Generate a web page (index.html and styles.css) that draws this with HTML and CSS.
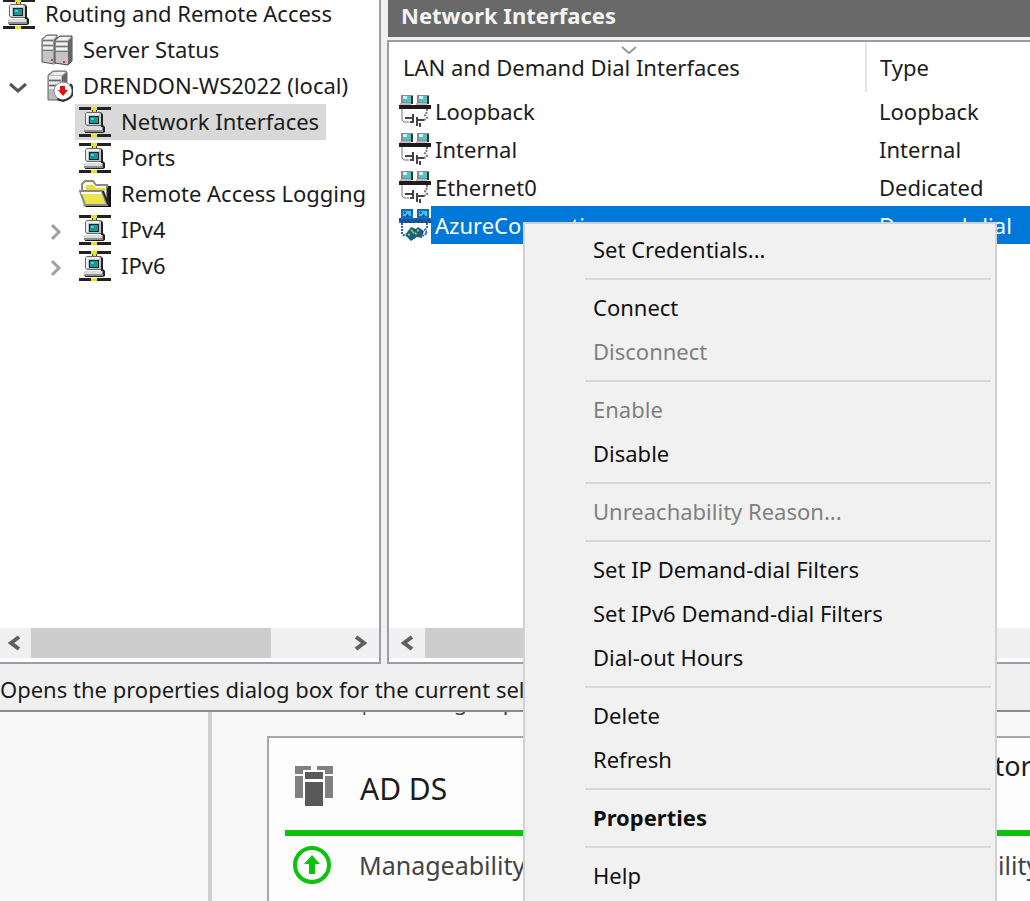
FILE: index.html
```html
<!DOCTYPE html>
<html lang="en">
<head>
<meta charset="utf-8">
<title>Routing and Remote Access</title>
<link rel="stylesheet" href="styles.css">
</head>
<body>
<svg class="defs" aria-hidden="true">
  <symbol id="i-net" viewBox="0 0 32 32">
    <path fill="#222" d="M0 1h32v3H0zM0 28h32v3H0z"/>
    <path fill="#e8e020" d="M12 1h6v3h-6zM12 28h6v3h-6zM14 4h3v2h-3z"/>
    <path fill="#444" d="M13 4h1v3h-1zM17 4h1v3h-1z"/>
    <path fill="#666" d="M8 6h14l2 2v12H8l-2-2V8z"/>
    <path fill="#222" d="M22 7l2 2v10l2 2v5l-2 1H6v-1h16v-6z"/>
    <path fill="#c4c7c7" d="M8 7h13l1 1v11H8l-1-1V8z"/>
    <path fill="#eee" d="M8 7h12v2H9v9H7V8z"/>
    <path fill="#222" d="M10 10h10v8H10z"/>
    <path fill="#129a98" d="M11 11h8v6h-8z"/>
    <path fill="#43d2c8" d="M12 12h3v2h-3z"/>
    <path fill="#8d9090" d="M6 21h18v5H5v-3z"/>
    <path fill="#dcdcdc" d="M6 21h17v3H5z"/>
  </symbol>
  <symbol id="i-servers" viewBox="0 0 32 32">
    <path fill="#c4c4c4" stroke="#555" d="M1 5l5-4h10v27l-3 2-12-2z"/>
    <path fill="#999" d="M12 6l3-3v26l-3 1z"/>
    <path fill="#c4c4c4" stroke="#444" d="M14 6l5-4h12v25l-4 4-13-2z"/>
    <path fill="#666" d="M27 7l4-4v24l-4 4z"/>
    <path fill="#f2f2f2" d="M6 2h9l-3 3H3zM19 3h10l-3 3H16zM2 8h10v2H2zM15 9h11v2H15zM2 13h10v2H2zM15 14h11v2H15z"/>
    <path fill="#777" d="M2 6h10v1H2zM15 7h12v1H15zM2 11h10v1H2zM15 12h12v1H15zM2 16h10v1H2zM15 17h12v1H15z"/>
    <path fill="#d33" d="M10 25h2v2h-2zM22 27h2v2h-2z"/>
  </symbol>
  <symbol id="i-stopped" viewBox="-5 0 32 32">
    <path fill="#bbb" stroke="#666" d="M2 5l5-4h13l1 2v22l-5 5H2z"/>
    <path fill="#eee" d="M3 6h12v3H3zM8 2h11l-3 3H5zM3 12h12v2H3zM3 17h12v2H3z"/>
    <path fill="#666" d="M16 6l5-4v12h-5zM3 10h12v1H3zM3 15h12v1H3z"/>
    <circle cx="17" cy="21" r="9" fill="#fff" stroke="#888" stroke-width="1"/>
    <path fill="none" stroke="#333" stroke-width="2" d="M24 14a9 9 0 0 1-2 15l-5 2-6-2"/>
    <path fill="#e01010" d="M14 16h5v4h3l-5 6-5-6h2z"/>
  </symbol>
  <symbol id="i-folder" viewBox="0 0 32 28">
    <path fill="#111" d="M28 6h4v21H7l-3-2h24z"/>
    <path fill="#f8f8e0" stroke="#888" stroke-width="2" d="M3 12V4l3-3h8l3 4h11v17"/>
    <path fill="#e4dd3c" d="M7 5h7l3 3h9v3H7z"/>
    <path fill="#e9e34e" stroke="#888" stroke-width="2" d="M1 11h22l5 14H6z"/>
    <path fill="none" stroke="#fff" stroke-width="2" d="M2 13h20"/>
    <path fill="none" stroke="#222" stroke-width="2" d="M24 11l5 13V8"/>
  </symbol>
  <symbol id="i-link" viewBox="0 0 32 32">
    <path fill="#8a8a8a" d="M2 0h12v9H2zM18 0h12v9H18z"/>
    <path fill="#4fc3c8" d="M4 1h8v6H4zM20 1h8v6h-8z"/>
    <path fill="#c9f3f3" d="M4 1h4v3H4zM20 1h4v3h-4z"/>
    <path fill="#333" d="M12 1h2v8h-2zM28 1h2v8h-2z"/>
    <path fill="#bbb" d="M1 8h11v2H1zM17 8h11v2H17z"/>
    <path fill="#1c1c1c" d="M0 10h32v4H0z"/>
    <path fill="none" stroke="#777" stroke-width="1" d="M3 14v11l2 2h5"/>
    <path fill="none" stroke="#777" stroke-width="2" stroke-dasharray="2 1" d="M28 14v3l-2 3 2 3-3 2h-5"/>
    <path fill="none" stroke="#444" stroke-width="2" d="M6 23h8M14 19v8M18 22v9M18 25h7M11 27h4M21 28v4"/>
  </symbol>
  <symbol id="i-dial" viewBox="0 0 32 32">
    <path fill="#1669b8" d="M2 0h12v9H2zM18 0h12v9H18zM0 9h32v5H0z"/>
    <path fill="#38c4f0" d="M4 2h8v5H4zM20 2h8v5h-8z"/>
    <path fill="none" stroke="#0b4380" stroke-width="2" stroke-dasharray="2 2" d="M0 11h32M2 13h30M5 3l5 5M21 3l5 5"/>
    <path fill="none" stroke="#1d6db5" stroke-width="2" stroke-dasharray="2 1" d="M3 14v11l3 2M28 14v4l-2 3 2 3-4 3"/>
    <path fill="#1c5f86" d="M6 26l6-8 5 2 2-2 6 4-2 7-5-1-6 4z"/>
    <path fill="none" stroke="#a8c63c" stroke-width="2" stroke-dasharray="2 3" d="M9 26l11-5M12 21l8 6"/>
  </symbol>
  <symbol id="i-left" viewBox="0 0 14 16"><path fill="none" stroke="#606060" stroke-width="4" d="M12 2L4 8l8 6"/></symbol>
  <symbol id="i-right" viewBox="0 0 14 16"><path fill="none" stroke="#606060" stroke-width="4" d="M2 2l8 6-8 6"/></symbol>
  <symbol id="i-up" viewBox="0 0 40 40">
    <circle cx="20" cy="20" r="17" fill="none" stroke="#0cc20c" stroke-width="4"/>
    <path fill="#0cc20c" d="M20 10l8 9h-5v10h-6V19h-5z"/>
  </symbol>
  <symbol id="i-adds" viewBox="0 0 40 42">
    <path fill="#808080" d="M1 1h16v4H9v4H1zM1 11h8v22H1zM23 1h16v8h-8V5h-8zM31 11h8v22h-8z"/>
    <path fill="#595959" d="M11 7h18v7H11zM11 17h18v24H11z"/>
  </symbol>
</svg>

<div class="screen">
  <main class="console">
    <nav class="pane tree" aria-label="Console tree">
      <ul class="nodes">
        <li class="node"><svg class="icon"><use href="#i-net"/></svg><span class="label">Routing and Remote Access</span></li>
        <li class="node level-1"><svg class="icon"><use href="#i-servers"/></svg><span class="label">Server Status</span></li>
        <li class="node level-1"><button class="twist open" aria-label="Collapse"><svg viewBox="0 0 20 12"><path d="M2 2l8 7 8-7"/></svg></button><svg class="icon"><use href="#i-stopped"/></svg><span class="label">DRENDON-WS2022 (local)</span></li>
        <li class="node level-2 selected"><svg class="icon"><use href="#i-net"/></svg><span class="label">Network Interfaces</span></li>
        <li class="node level-2"><svg class="icon"><use href="#i-net"/></svg><span class="label">Ports</span></li>
        <li class="node level-2"><svg class="icon"><use href="#i-folder"/></svg><span class="label">Remote Access Logging</span></li>
        <li class="node level-2"><button class="twist" aria-label="Expand"><svg viewBox="0 0 12 20"><path d="M2 3l7 7-7 7"/></svg></button><svg class="icon"><use href="#i-net"/></svg><span class="label">IPv4</span></li>
        <li class="node level-2"><button class="twist" aria-label="Expand"><svg viewBox="0 0 12 20"><path d="M2 3l7 7-7 7"/></svg></button><svg class="icon"><use href="#i-net"/></svg><span class="label">IPv6</span></li>
      </ul>
      <div class="scrollbar">
        <button class="arrow" aria-label="Scroll left"><svg><use href="#i-left"/></svg></button>
        <div class="track"><div class="thumb"></div></div>
        <button class="arrow" aria-label="Scroll right"><svg><use href="#i-right"/></svg></button>
      </div>
    </nav>
    <section class="detail">
      <h1 class="title">Network Interfaces</h1>
      <div class="pane list">
        <table class="grid">
          <thead>
            <tr><th class="name"><svg class="sort" viewBox="0 0 16 8"><path d="M1 1l7 6 7-6"/></svg>LAN and Demand Dial Interfaces</th><th class="type">Type</th></tr>
          </thead>
          <tbody>
            <tr><td><div class="cell"><svg class="icon"><use href="#i-link"/></svg><span class="text">Loopback</span></div></td><td class="kind">Loopback</td></tr>
            <tr><td><div class="cell"><svg class="icon"><use href="#i-link"/></svg><span class="text">Internal</span></div></td><td class="kind">Internal</td></tr>
            <tr><td><div class="cell"><svg class="icon"><use href="#i-link"/></svg><span class="text">Ethernet0</span></div></td><td class="kind">Dedicated</td></tr>
            <tr class="selected"><td><div class="cell"><svg class="icon"><use href="#i-dial"/></svg><span class="text">AzureConnection</span></div></td><td class="kind">Demand-dial</td></tr>
          </tbody>
        </table>
        <div class="scrollbar">
          <button class="arrow" aria-label="Scroll left"><svg><use href="#i-left"/></svg></button>
          <div class="track"><div class="thumb"></div></div>
        </div>
      </div>
    </section>
  </main>
  <footer class="status">Opens the properties dialog box for the current selection.</footer>
  <section class="dashboard">
    <div class="side"></div>
    <div class="roles">
      <p class="summary">Roles: 4&nbsp; | &nbsp;Server groups: 1</p>
      <div class="cards">
        <article class="card">
          <header class="head"><svg class="glyph"><use href="#i-adds"/></svg><h2 class="role short">AD DS</h2></header>
          <p class="line"><svg class="glyph"><use href="#i-up"/></svg>Manageability</p>
        </article>
        <article class="card">
          <header class="head"><svg class="glyph"><use href="#i-adds"/></svg><h2 class="role">File and Storage<br>Services</h2></header>
          <p class="line"><svg class="glyph"><use href="#i-up"/></svg>Manageability</p>
        </article>
      </div>
    </div>
  </section>

  <div class="menu" role="menu">
    <button class="item" role="menuitem">Set Credentials...</button>
    <hr class="rule">
    <button class="item" role="menuitem">Connect</button>
    <button class="item" role="menuitem" disabled>Disconnect</button>
    <hr class="rule">
    <button class="item" role="menuitem" disabled>Enable</button>
    <button class="item" role="menuitem">Disable</button>
    <hr class="rule">
    <button class="item" role="menuitem" disabled>Unreachability Reason...</button>
    <hr class="rule">
    <button class="item" role="menuitem">Set IP Demand-dial Filters</button>
    <button class="item" role="menuitem">Set IPv6 Demand-dial Filters</button>
    <button class="item" role="menuitem">Dial-out Hours</button>
    <hr class="rule">
    <button class="item" role="menuitem">Delete</button>
    <button class="item" role="menuitem">Refresh</button>
    <hr class="rule">
    <button class="item default" role="menuitem">Properties</button>
    <hr class="rule">
    <button class="item" role="menuitem">Help</button>
  </div>
</div>
</body>
</html>
```
FILE: styles.css
```css
* { box-sizing: border-box; }

body {
  margin: 0;
  font: 22px/36px "Noto Sans", "Open Sans", sans-serif;
  color: #1c1c1c;
}

button {
  border: 0;
  padding: 0;
  background: none;
  font: inherit;
  color: inherit;
}

.defs { display: none; }

.screen {
  position: relative;
  display: flex;
  flex-direction: column;
  height: 100vh;
  overflow: hidden;
  background: #f0f0f0;
}

.console {
  flex: 1;
  display: flex;
  gap: 6px;
  min-height: 0;
}

.pane {
  display: flex;
  flex-direction: column;
  justify-content: space-between;
  background: #fff;
  border: 0 solid #9a9ea8;
  border-bottom-width: 2px;
  padding-bottom: 4px;
}

.tree {
  flex: none;
  width: 381px;
  border-right-width: 2px;
  overflow: hidden;
}

.nodes {
  list-style: none;
  margin: -4px 0 0;
  padding: 0;
}

.node {
  display: flex;
  align-items: center;
  height: 36px;
  padding-left: 3px;
  white-space: nowrap;
}

.node .label { padding: 0 7px 2px 10px; line-height: 34px; }
.level-1 { padding-left: 41px; }
.level-2 { padding-left: 79px; }

.icon {
  flex: none;
  width: 32px;
  height: 32px;
}

.node.selected .icon,
.node.selected .label { background: #d9d9d9; }

.node.selected .icon {
  box-sizing: content-box;
  margin-left: -4px;
  padding: 2px 0 2px 4px;
}

.twist {
  display: flex;
  justify-content: center;
  width: 20px;
  margin-left: -33px;
  margin-right: 13px;
  padding-top: 3px;
}

.twist svg {
  width: 12px;
  height: 20px;
  fill: none;
  stroke: #a0a0a0;
  stroke-width: 3;
}

.twist.open svg {
  width: 20px;
  height: 12px;
  stroke: #555;
}

.scrollbar {
  display: flex;
  height: 30px;
  background: #f0f0f0;
}

.arrow {
  display: flex;
  align-items: center;
  justify-content: center;
  width: 36px;
}

.tree .arrow:first-child { width: 31px; padding-right: 4px; }
.arrow svg { width: 14px; height: 16px; }
.track { flex: 1; }
.thumb { width: 77%; height: 30px; background: #cdcdcd; }

.detail {
  flex: 1;
  display: flex;
  flex-direction: column;
  gap: 3px;
  min-width: 0;
}

.title {
  margin: 0 0 0 1px;
  padding: 0 13px;
  height: 37px;
  background: #696969;
  color: #f4f4f4;
  font-size: 22px;
  line-height: 30px;
}

.list {
  flex: 1;
  border-top-width: 2px;
  border-left-width: 2px;
}

.grid {
  width: 100%;
  table-layout: fixed;
  border-collapse: collapse;
}

.grid th {
  position: relative;
  height: 50px;
  padding: 0 13px;
  font-weight: 400;
  text-align: left;
  white-space: nowrap;
}

.grid .name {
  width: 477px;
  padding-left: 14px;
  border-right: 2px solid #e4e4e4;
}

.sort {
  position: absolute;
  top: 4px;
  left: calc(50% - 6px);
  width: 16px;
  height: 8px;
  fill: none;
  stroke: #999;
  stroke-width: 2;
}

.grid td { height: 38px; padding: 0; white-space: nowrap; }

.cell {
  display: flex;
  align-items: center;
  height: 38px;
  padding-left: 10px;
}

.cell .text { flex: 1; padding-left: 4px; line-height: 38px; }
.grid .kind { padding-left: 13px; line-height: 38px; }

.grid .selected .text,
.grid .selected .kind { background: #0078d7; color: #fff; }

.status {
  flex: none;
  height: 48px;
  line-height: 50px;
  border-bottom: 2px solid #8a8a8a;
  white-space: nowrap;
  overflow: hidden;
}

.dashboard {
  flex: none;
  display: flex;
  height: 189px;
  background: #f8f8f8;
  overflow: hidden;
}

.side {
  flex: none;
  width: 212px;
  border-right: 4px solid #d0d0d0;
}

.roles { flex: 1; padding-left: 55px; min-width: 0; }
.summary { margin: -29px 0 17px; color: #444; white-space: nowrap; }
.cards { display: flex; gap: 20px; }

.card {
  flex: none;
  width: 494px;
  height: 220px;
  padding: 0 16px;
  border: 2px solid #a8a8a8;
  background: #fdfdfd;
}

.head {
  display: flex;
  align-items: center;
  gap: 26px;
  height: 98px;
  padding-left: 9px;
  padding-top: 4px;
  border-bottom: 6px solid #0cc20c;
}

.role { margin: 0; font-size: 27px; font-weight: 400; line-height: 40px; }
.role.short { padding-top: 6px; font-size: 30px; }

.line {
  display: flex;
  align-items: center;
  gap: 27px;
  margin: 0;
  padding-left: 7px;
  height: 58px;
  font-size: 25px;
  color: #444;
}

.glyph { flex: none; width: 40px; height: 42px; }

.menu {
  position: absolute;
  top: 222px;
  left: 523px;
  width: 474px;
  padding: 4px 4px 4px 60px;
  border: 2px solid #d2d2d2;
  background: #f1f1f1;
  color: #111;
}

.item {
  display: block;
  width: 100%;
  height: 44px;
  padding: 0 0 2px 8px;
  text-align: left;
  line-height: 42px;
  white-space: nowrap;
}

.item:disabled { color: #808080; }
.item.default { font-weight: 700; }

.rule {
  height: 2px;
  margin: 6px 0;
  border: 0;
  background: #d9d9d9;
}
```
